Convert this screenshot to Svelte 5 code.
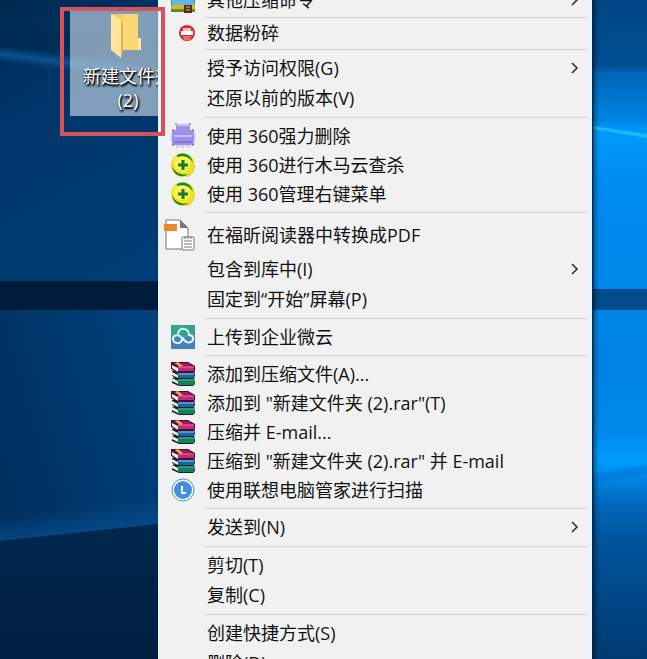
<script>
    const groups = [
        [{ label: '其他压缩命令', icon: 'zip', size: 'first', sub: true }],
        [{ label: '数据粉碎', icon: 'shred', size: 'small' }],
        [
            { label: '授予访问权限(G)', sub: true },
            { label: '还原以前的版本(V)' }
        ],
        [
            { label: '使用 360强力删除', icon: 'remove', size: 'app' },
            { label: '使用 360进行木马云查杀', icon: 'shield', size: 'app' },
            { label: '使用 360管理右键菜单', icon: 'shield', size: 'app' }
        ],
        [
            { label: '在福昕阅读器中转换成PDF', icon: 'pdf', size: 'tall' },
            { label: '包含到库中(I)', sub: true },
            { label: '固定到“开始”屏幕(P)' }
        ],
        [{ label: '上传到企业微云', icon: 'cloud', size: 'app' }],
        [
            { label: '添加到压缩文件(A)...', icon: 'rar', size: 'app' },
            { label: '添加到 "新建文件夹 (2).rar"(T)', icon: 'rar', size: 'app' },
            { label: '压缩并 E-mail...', icon: 'rar', size: 'app' },
            { label: '压缩到 "新建文件夹 (2).rar" 并 E-mail', icon: 'rar', size: 'app' },
            { label: '使用联想电脑管家进行扫描', icon: 'lenovo', size: 'app' }
        ],
        [{ label: '发送到(N)', sub: true }],
        [{ label: '剪切(T)' }, { label: '复制(C)' }],
        [{ label: '创建快捷方式(S)' }, { label: '删除(D)' }]
    ]
</script>

<main class="desktop">
    <svg class="wallpaper" viewBox="0 0 647 659" preserveAspectRatio="none" aria-hidden="true">
        <defs>
            <linearGradient id="leftTop" x1="0" y1="0" x2="0.6" y2="1">
                <stop offset="0" stop-color="#002850" />
                <stop offset="0.3" stop-color="#00356a" />
                <stop offset="1" stop-color="#003f78" />
            </linearGradient>
            <linearGradient id="leftLow" x1="0" y1="0.4" x2="0.6" y2="0.2">
                <stop offset="0" stop-color="#003060" />
                <stop offset="1" stop-color="#00437f" />
            </linearGradient>
            <linearGradient id="leftFloor" x1="0" y1="0" x2="0" y2="1">
                <stop offset="0" stop-color="#00284f" />
                <stop offset="1" stop-color="#001f40" />
            </linearGradient>
            <linearGradient id="beam" x1="0" y1="46" x2="-2" y2="62" gradientUnits="userSpaceOnUse">
                <stop offset="0" stop-color="#0a5596" stop-opacity="0" />
                <stop offset="0.5" stop-color="#0f5a9c" stop-opacity="0.8" />
                <stop offset="1" stop-color="#0a5596" stop-opacity="0" />
            </linearGradient>
            <linearGradient id="glow" x1="0" y1="516" x2="3" y2="542" gradientUnits="userSpaceOnUse">
                <stop offset="0" stop-color="#0a5596" stop-opacity="0" />
                <stop offset="1" stop-color="#0a5596" stop-opacity="0.6" />
            </linearGradient>
            <linearGradient id="right" x1="0" y1="0" x2="0" y2="659" gradientUnits="userSpaceOnUse">
                <stop offset="0" stop-color="#004683" />
                <stop offset="0.1" stop-color="#004f94" />
                <stop offset="0.11" stop-color="#0065b8" />
                <stop offset="0.18" stop-color="#0082e2" />
                <stop offset="0.2" stop-color="#009cf8" />
                <stop offset="0.27" stop-color="#008cf0" />
                <stop offset="0.55" stop-color="#0084e6" />
                <stop offset="0.65" stop-color="#0088ea" />
                <stop offset="0.7" stop-color="#009bfb" />
                <stop offset="0.73" stop-color="#0083e2" />
                <stop offset="0.77" stop-color="#0064b8" />
                <stop offset="0.83" stop-color="#00529a" />
                <stop offset="1" stop-color="#003b72" />
            </linearGradient>
        </defs>
        <rect width="300" height="284" fill="url(#leftTop)" />
        <path d="M0 30 H158 V66 L0 46Z" fill="#002348" opacity="0.3" />
        <path d="M0 46 L158 66 V82 L0 62Z" fill="url(#beam)" />
        <rect y="308" width="300" height="351" fill="url(#leftLow)" />
        <path d="M0 516 L158 499 V524 L0 541Z" fill="url(#glow)" />
        <path d="M0 541 L158 524 V659 H0Z" fill="url(#leftFloor)" />
        <rect y="281" width="300" height="29" fill="#001c3c" />
        <rect x="300" width="347" height="659" fill="url(#right)" />
        <path d="M592 126 L647 134 V138 L592 129Z" fill="#19baff" />
        <path d="M592 474 L647 465 V474 L592 484Z" fill="#0070cc" opacity="0.4" />
        <rect x="300" y="289" width="347" height="21" fill="#004c8c" />
    </svg>

    <section class="icons">
        <button class="folder">
            <svg width="36" height="46" viewBox="2 0 36 46" aria-hidden="true">
                <path d="M3 1h27v24h3v12H10z" fill="#f4cd61" />
                <path d="M14 1h16v24h3v12H14z" fill="#f9d873" />
                <path d="M30 25v12h3V25z" fill="#ffe7a0" />
                <path d="M3 1l10 6v38L3 37z" fill="#ffe69a" />
                <path d="M13 7v38l2-8V10z" fill="#dfb44b" />
            </svg>
            <span>新建文件夹<br />(2)</span>
        </button>
    </section>

    <nav class="menu" role="menu">
        {#each groups as group, i}
            {#if i > 0}
                <hr />
            {/if}
            {#each group as item}
                <button class="item {item.size ?? ''}" role="menuitem">
                    <span class="slot">
                        {#if item.icon}
                            <svg width="38" height="32" viewBox="0 0 38 32" aria-hidden="true">
                                {#if item.icon === 'zip'}
                                    <path d="M7 4h24v24H7z" fill="#4a9a3c" />
                                    <path d="M8 8h22v14H8z" fill="#63b6ea" />
                                    <path d="M7 22l8-2 8 2 8-2v5H7z" fill="#d9b530" />
                                    <path d="M7 27h22v1H7z" fill="#6d7a1c" />
                                    <path d="M20 21h8v8h-8z" fill="#5a2a14" />
                                    <path d="M22 23h4M22 26h4" stroke="#e9b840" />
                                {:else if item.icon === 'shred'}
                                    <circle cx="23" cy="16" r="8" fill="#cf2f33" />
                                    <path d="M19 11h8v3h-8z" fill="#f6b9b7" />
                                    <path d="M17 14h12v4H17z" fill="#fff" />
                                    <path d="M19 20h8M20 22h6" stroke="#f3aaa8" />
                                {:else if item.icon === 'remove'}
                                    <path d="M12 4h14v8H12z" fill="#9d93e6" />
                                    <path d="M8 10h22v15H8z" fill="#9b90ea" />
                                    <path d="M12 5h14M10 16h18" stroke="#c3bcf7" stroke-width="2" />
                                    <path d="M10 22h18" stroke="#8378d8" stroke-width="2" />
                                    <path d="M8 12l-1 9M30 12l1 9" stroke="#c9c4f2" />
                                    <path d="M11 4h2M25 4h2M8 10h2M28 10h2M8 25h2M28 25h2" stroke="#5d589d" />
                                    <path d="M13 25v3M16 25v2M19 25v3M22 25v2M25 25v3" stroke="#aaa2ee" />
                                {:else if item.icon === 'shield'}
                                    <circle cx="19" cy="16" r="12" fill="#efe32a" />
                                    <circle cx="18" cy="14" r="8" fill="#fff253" />
                                    <path d="M13 6C20 2 28 6 29 14C26 8 20 6 13 8Z" fill="#188a2b" />
                                    <path d="M8 17C9 26 17 30 25 25C18 27 11 24 8 17Z" fill="#188a2b" />
                                    <path d="M30 17C30 23 27 26 23 28" fill="none" stroke="#e7bf22" />
                                    <path d="M19 11v10M14 16h10" stroke="#187b28" stroke-width="3" />
                                {:else if item.icon === 'pdf'}
                                    <path d="M2 1h14l8 8v21H2z" fill="#fff" stroke="#777" />
                                    <path d="M16 1v8h8z" fill="#777" />
                                    <path d="M0 5h13v7H0z" fill="#e58a2b" />
                                    <rect x="18" y="18" width="12" height="13" rx="1" fill="#fff" stroke="#777" />
                                    <path d="M20 22h8M20 25h8M20 28h8M21 17v3M24 17v3M27 17v3" stroke="#777" />
                                {:else if item.icon === 'cloud'}
                                    <path d="M7 4h24v12H7z" fill="#36a38c" />
                                    <path d="M7 16h24v12H7z" fill="#4283bb" />
                                    <path d="M18 18c0 6-9 5-9 0 0-4 5-5 8-2l4 4c3 3 8 1 8-2 0-3-2-4-4-4 0-8-11-8-11-1" fill="none" stroke="#e9fbff" stroke-width="2" />
                                    <path d="M17 20l3-3" fill="none" stroke="#e9fbff" stroke-width="2" />
                                {:else if item.icon === 'rar'}
                                    <path d="M8 20l6-2h16l1 8-2 2H15l-7-3z" fill="#12231e" />
                                    <path d="M14 21h16v2H14z" fill="#2a9a78" />
                                    <path d="M14 23h16v4H14z" fill="#16805c" />
                                    <path d="M8 20l6 3v3l-6-3z" fill="#e9eee8" />
                                    <path d="M8 13l6-2h16l1 7-2 3H15l-7-3z" fill="#101c34" />
                                    <path d="M14 15h16v2H14z" fill="#4b98ca" />
                                    <path d="M14 17h16v3H14z" fill="#1d65a0" />
                                    <path d="M8 14l6 3v3l-6-3z" fill="#e9eee8" />
                                    <path d="M7 4h17l7 4v5l-2 2H15l-8-4z" fill="#4a0c30" />
                                    <path d="M9 5h15l6 4H15z" fill="#a31761" />
                                    <path d="M14 9h16v4H14z" fill="#c02a78" />
                                    <path d="M14 9h16" stroke="#e27bb0" />
                                    <path d="M8 7l6 3v4l-6-4z" fill="#f2efe8" />
                                    <path d="M11 5l3-1 5 4-3 1z" fill="#e6ae43" />
                                {:else}
                                    <circle cx="19" cy="16" r="11" fill="#fff" stroke="#4c8bd0" />
                                    <circle cx="19" cy="16" r="9" fill="#428fdf" />
                                    <path d="M18 12v7h4" fill="none" stroke="#fff" stroke-width="2" />
                                {/if}
                            </svg>
                        {/if}
                    </span>
                    <span class="label">{item.label}</span>
                    {#if item.sub}
                        <svg class="arrow" width="8" height="12" viewBox="0 0 8 12" aria-hidden="true">
                            <path d="M1 1l5 5-5 5" fill="none" stroke="#333" stroke-width="1.6" />
                        </svg>
                    {/if}
                </button>
            {/each}
        {/each}
    </nav>

    <div class="highlight"></div>
</main>

<style>
    :global(body) {
        margin: 0;
    }

    .desktop {
        position: relative;
        display: flex;
        height: 100vh;
        overflow: hidden;
        background: #003468;
        font-family: "Open Sans", "Noto Sans CJK SC", sans-serif;
        font-size: 18px;
    }

    .wallpaper {
        position: absolute;
        width: 100%;
        height: 100%;
    }

    button {
        font: inherit;
        border: none;
        cursor: default;
    }

    .icons {
        position: relative;
        flex: 0 0 158px;
        min-width: 0;
        box-sizing: border-box;
        padding: 8px 0 0 70px;
    }

    .folder {
        display: flex;
        flex-direction: column;
        align-items: center;
        gap: 5px;
        width: 116px;
        height: 108px;
        padding: 5px 0 0;
        background: rgba(190, 208, 222, 0.68);
        color: white;
        line-height: 24px;
        text-shadow: 1px 1px 2px #000, 1px 2px 2px #000;
    }

    .menu {
        position: relative;
        flex: 1;
        align-self: flex-start;
        min-width: 0;
        box-sizing: border-box;
        margin: -13px 55px 0 0;
        padding-bottom: 30px;
        border: solid #e6f6fd;
        border-width: 0 2px;
        background: #f1f1f1;
        box-shadow: 1px 0 1px #002850, 3px 2px 5px rgba(0, 0, 0, 0.5);
    }

    hr {
        height: 1px;
        margin: 4px 2px 3px 44px;
        border: none;
        background: #d2d2d2;
    }

    .item {
        display: flex;
        align-items: center;
        width: 100%;
        height: 30px;
        padding: 0 11px 0 0;
        background: none;
        color: #111;
        text-align: left;
        white-space: nowrap;
    }

    .item:hover {
        background: #fff;
    }

    .first {
        height: 26px;
    }

    .small {
        height: 24px;
    }

    .app {
        height: 29px;
    }

    .tall {
        height: 38px;
    }

    .slot {
        display: flex;
        flex: 0 0 43px;
        padding-left: 4px;
    }

    .label {
        flex: 1;
        line-height: 24px;
    }

    .highlight {
        position: absolute;
        top: 7px;
        left: 60px;
        width: 97px;
        height: 121px;
        border: 4px solid #d4535a;
        pointer-events: none;
    }
</style>
